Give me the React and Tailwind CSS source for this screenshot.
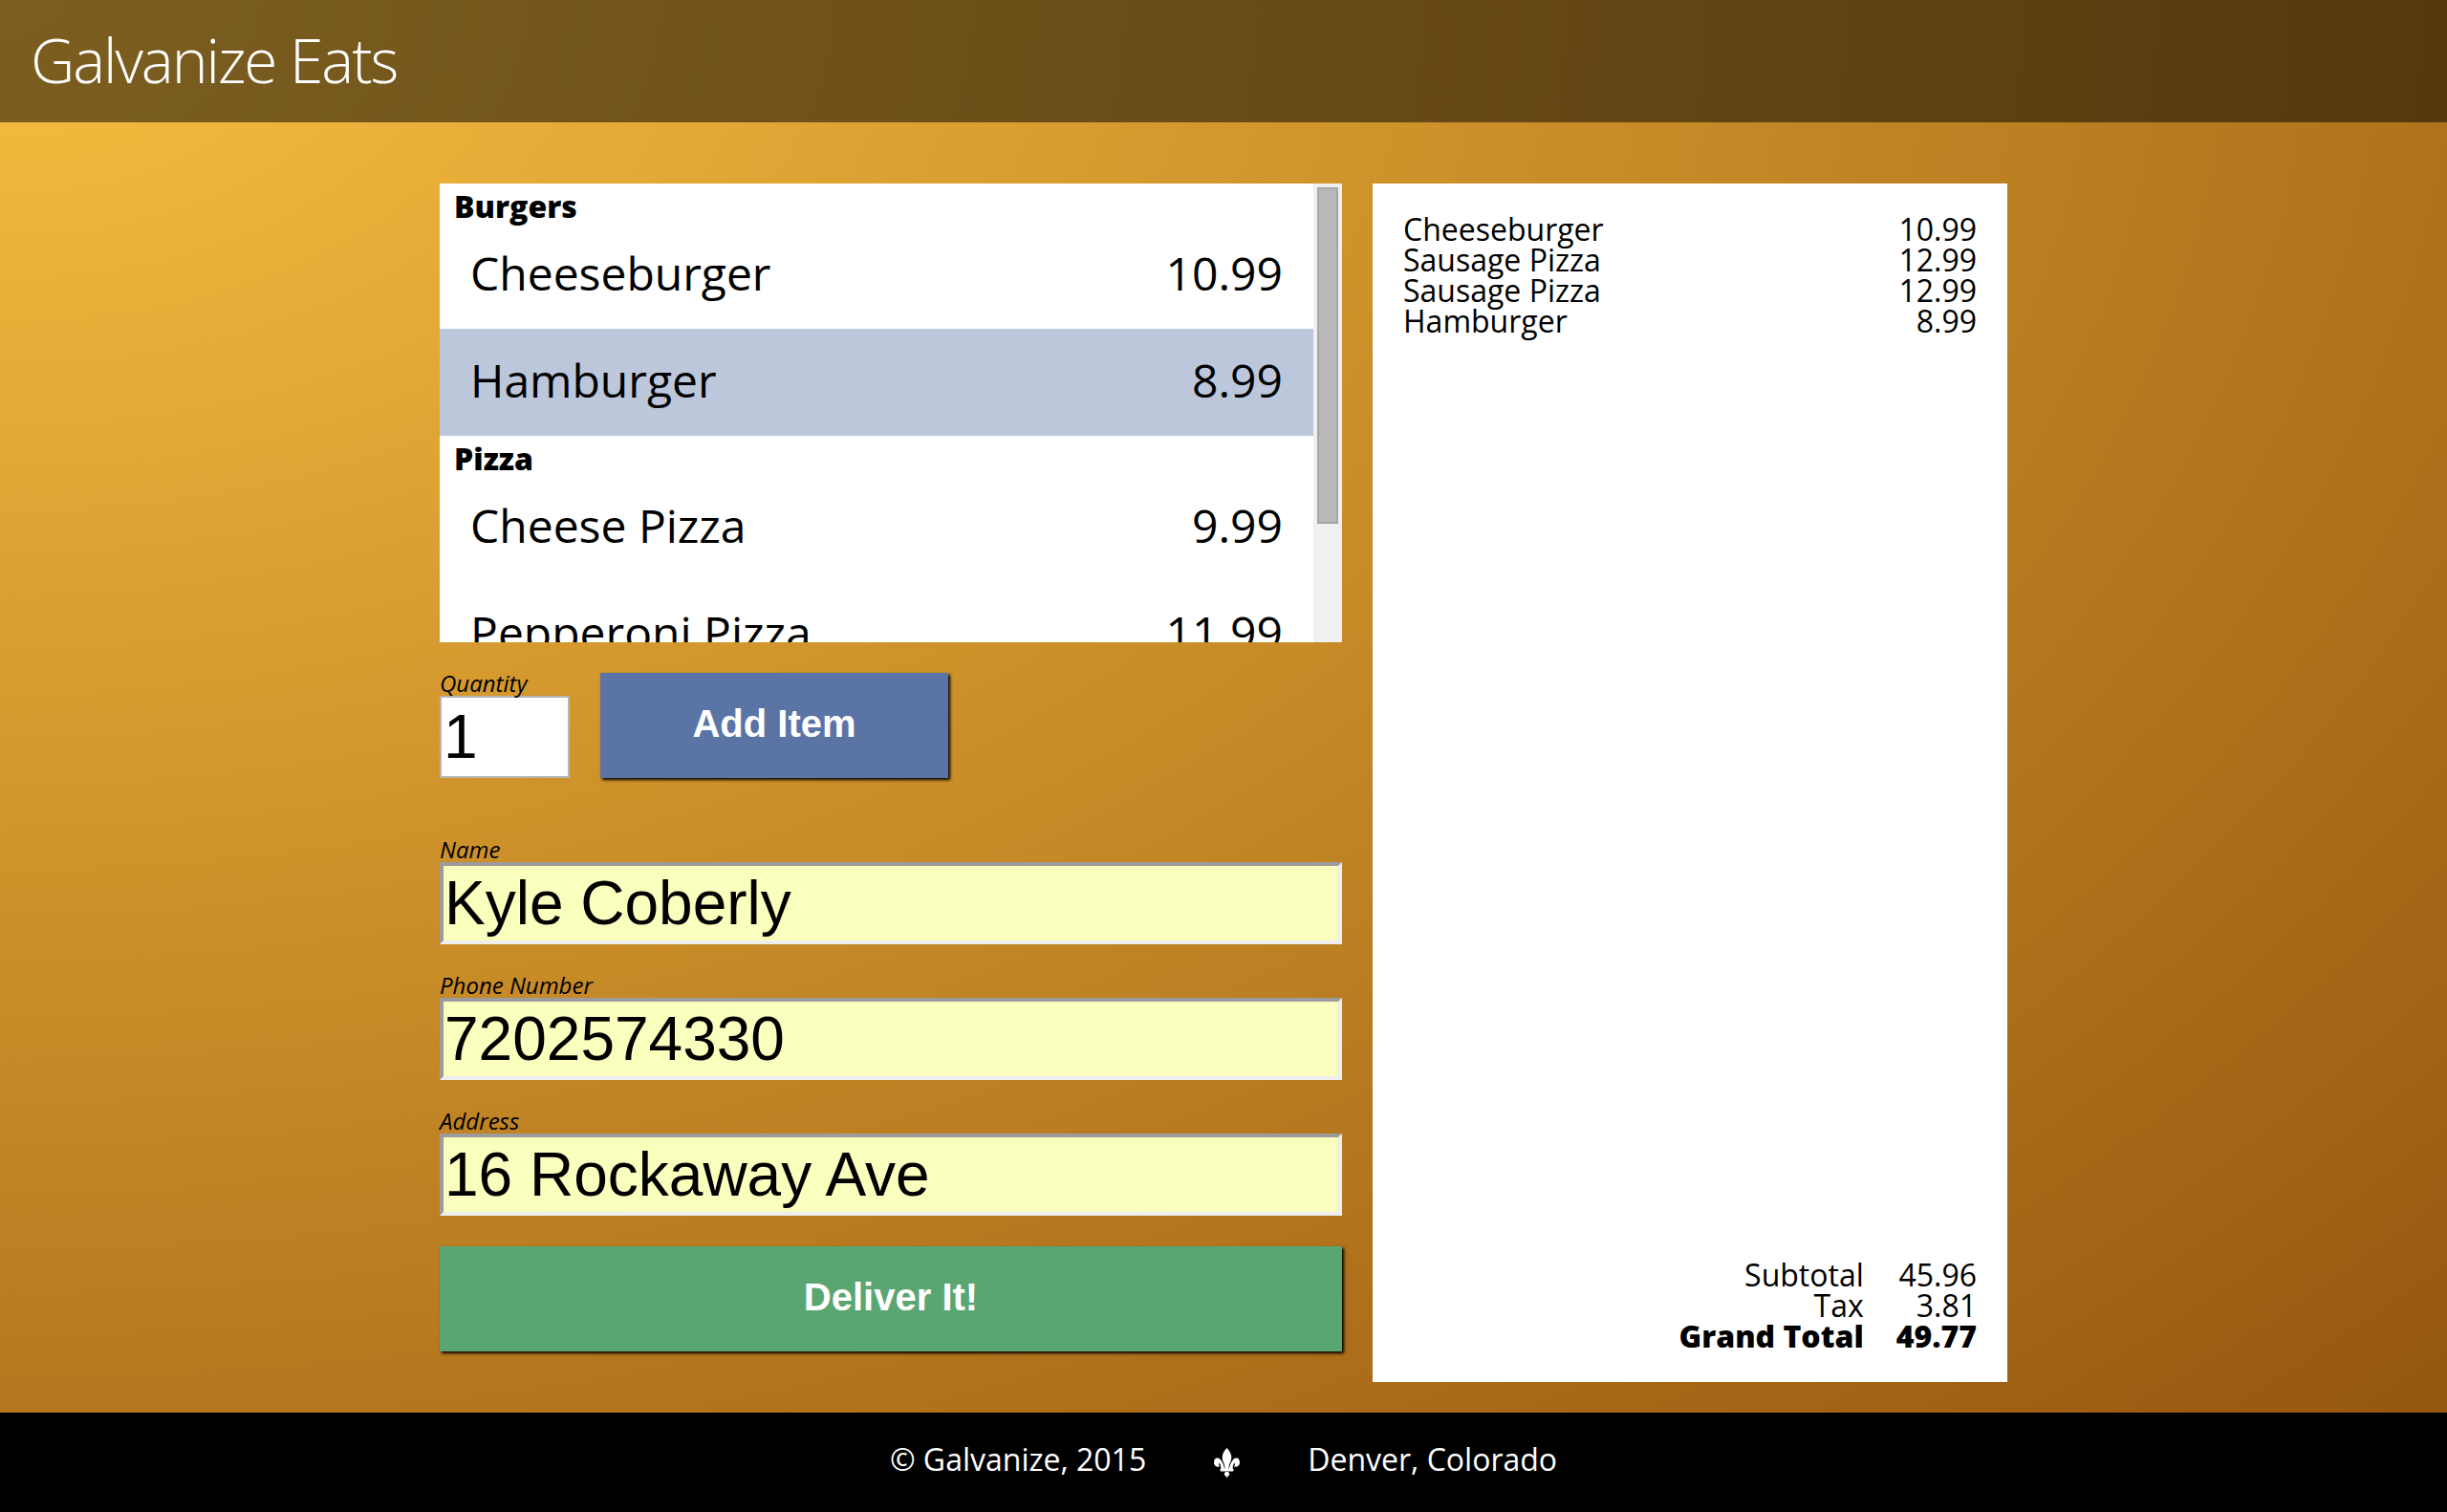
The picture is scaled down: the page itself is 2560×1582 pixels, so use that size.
const MENU = [
  {
    name: 'Burgers',
    items: [
      { name: 'Cheeseburger', price: '10.99' },
      { name: 'Hamburger', price: '8.99', selected: true },
    ],
  },
  {
    name: 'Pizza',
    items: [
      { name: 'Cheese Pizza', price: '9.99' },
      { name: 'Pepperoni Pizza', price: '11.99' },
    ],
  },
];

const ORDER = [
  { name: 'Cheeseburger', price: '10.99' },
  { name: 'Sausage Pizza', price: '12.99' },
  { name: 'Sausage Pizza', price: '12.99' },
  { name: 'Hamburger', price: '8.99' },
];

function MenuList() {
  return (
    <div className="flex h-[480px] bg-white overflow-hidden">
      <div className="flex-1 min-w-0">
        {MENU.map((group) => (
          <div key={group.name}>
            <div className="h-[40px] pl-[15px] text-[32px] leading-[48px] font-extrabold text-black">
              {group.name}
            </div>
            {group.items.map((item) => (
              <div
                key={item.name}
                className={`flex h-[112px] items-center justify-between px-[32px] pb-[5px] text-[48px] text-black ${
                  item.selected ? 'bg-[#bcc7dc]' : ''
                }`}
              >
                <span>{item.name}</span>
                <span>{item.price}</span>
              </div>
            ))}
          </div>
        ))}
      </div>
      <div className="w-[30px] shrink-0 bg-[#f0f0f0] px-[4px] pt-[4px]">
        <div className="h-[352px] border-2 border-[#a6a6a6] bg-[#b9b9b9]"></div>
      </div>
    </div>
  );
}

function Field({ label, value }) {
  return (
    <div>
      <label className="block h-[24px] text-[24px] leading-[22px] italic text-black">{label}</label>
      <input
        readOnly
        defaultValue={value}
        className="block h-[86px] w-full border-4 border-t-[#9c9c9c] border-l-[#9c9c9c] border-r-[#eeeeee] border-b-[#eeeeee] bg-[#faffbd] px-[1px] font-['Liberation_Sans',sans-serif] text-[64px] text-black outline-none"
      />
    </div>
  );
}

function Fleur() {
  return (
    <svg width="27" height="31" viewBox="0 0 27 31" fill="white">
      <path d="M13.500 0C17.500 4 19.500 9 17.500 14C16 17 15.500 19 15.500 22H11.500C11.500 19 11 17 9.500 14C7.500 9 9.500 4 13.500 0Z" />
      <path d="M11.500 24C10.500 18 8.500 11.500 4 10.500C1 10 0 13 0 15.500C0 18.500 3 20.500 6 19.500C5 18 5 16.500 5.500 15.500C7 17 7.500 20 7.500 24Z" />
      <path d="M15.500 24C16.500 18 18.500 11.500 23 10.500C26 10 27 13 27 15.500C27 18.500 24 20.500 21 19.500C22 18 22 16.500 21.500 15.500C20 17 19.500 20 19.500 24Z" />
      <rect x="6.500" y="21.500" width="14" height="3" rx="1" />
      <path d="M13.500 31L10.500 27.500L12 25H15L16.500 27.500Z" />
    </svg>
  );
}

export default function App() {
  return (
    <div className="flex min-h-[1582px] flex-col bg-[radial-gradient(ellipse_farthest-corner_at_top_left,#f8be40,#92530d)] font-['Open_Sans',sans-serif]">
      <header className="flex h-[128px] items-center bg-black/50 pb-[3px] pl-[32px]">
        <h1 className="text-[64px] font-light tracking-[-0.032em] text-white">Galvanize Eats</h1>
      </header>

      <main className="mx-auto flex w-[1640px] flex-1 gap-[32px] pt-[64px] pb-[32px]">
        <div className="flex w-[944px] flex-col">
          <MenuList />

          <div className="mt-[32px] flex gap-[32px]">
            <div className="w-[136px]">
              <label className="block h-[24px] text-[24px] leading-[22px] italic text-black">Quantity</label>
              <input
                readOnly
                defaultValue="1"
                className="block h-[86px] w-full border-2 border-[#b5b5b5] bg-white px-[2px] font-['Liberation_Sans',sans-serif] text-[64px] text-black outline-none"
              />
            </div>
            <button className="h-[110px] w-[364px] bg-[#5a74a6] pb-[4px] font-['Liberation_Sans',sans-serif] text-[40px] font-bold text-white shadow-[2px_2px_3px_#000]">
              Add Item
            </button>
          </div>

          <div className="mt-[64px] flex flex-col gap-[32px]">
            <Field label="Name" value="Kyle Coberly" />
            <Field label="Phone Number" value="7202574330" />
            <Field label="Address" value="16 Rockaway Ave" />
            <button className="h-[110px] w-full bg-[#5aa672] pb-[5px] font-['Liberation_Sans',sans-serif] text-[40px] font-bold text-white shadow-[2px_2px_3px_#000]">
              Deliver It!
            </button>
          </div>
        </div>

        <aside className="flex w-[664px] flex-col justify-between bg-white p-[32px] text-[32px] leading-[32px] text-black">
          <div>
            {ORDER.map((line, i) => (
              <div key={i} className="flex justify-between">
                <span>{line.name}</span>
                <span>{line.price}</span>
              </div>
            ))}
          </div>
          <div className="grid grid-cols-[1fr_auto] gap-x-[34px] text-right">
            <span>Subtotal</span>
            <span>45.96</span>
            <span>Tax</span>
            <span>3.81</span>
            <span className="font-extrabold">Grand Total</span>
            <span className="font-extrabold">49.77</span>
          </div>
        </aside>
      </main>

      <footer className="flex h-[104px] items-center justify-center gap-[71px] bg-black text-[32px] text-white">
        <span className="pb-[6px]">© Galvanize, 2015</span>
        <Fleur />
        <span className="pb-[6px]">Denver, Colorado</span>
      </footer>
    </div>
  );
}
